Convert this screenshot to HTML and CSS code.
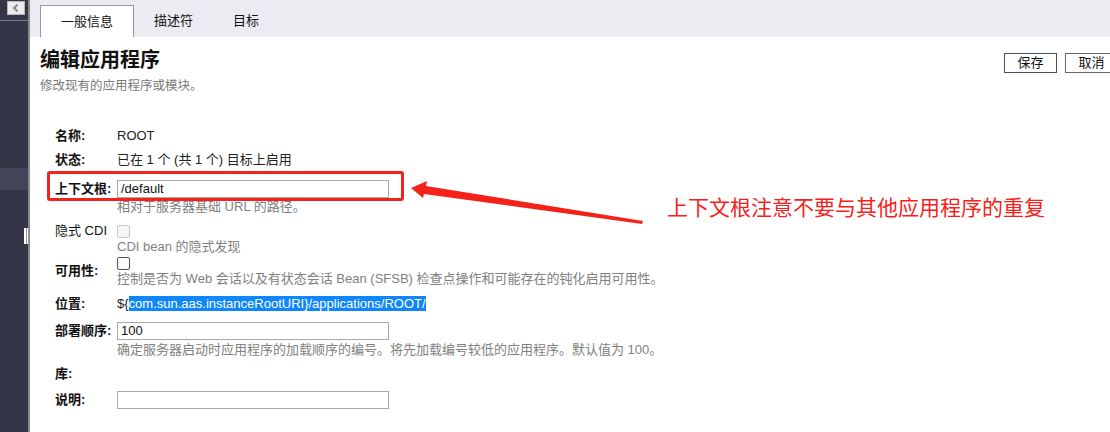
FILE: index.html
```html
<!DOCTYPE html>
<html lang="zh-CN">
<head>
<meta charset="utf-8">
<title>编辑应用程序</title>
<link rel="stylesheet" href="styles.css">
</head>
<body>
<div class="app">
  <aside class="sidebar">
    <div class="side-top">
      <button class="collapse" type="button" aria-label="收起">
        <svg width="10" height="10" viewBox="0 0 10 10"><path d="M6.5 1.5 L3 5 L6.5 8.5" fill="none" stroke="#8a8a8a" stroke-width="2"/></svg>
      </button>
    </div>
    <div class="side-item active"></div>
    <div class="grip"><i></i><i></i><i></i></div>
  </aside>
  <main class="main">
    <nav class="tabbar">
      <div class="tab active">一般信息</div>
      <div class="tab">描述符</div>
      <div class="tab">目标</div>
    </nav>
    <section class="content">
      <header class="head">
        <div class="titles">
          <h1 class="title">编辑应用程序</h1>
          <p class="subtitle">修改现有的应用程序或模块。</p>
        </div>
        <div class="actions">
          <button class="btn primary" type="button">保存</button>
          <button class="btn" type="button">取消</button>
        </div>
      </header>
      <div class="form">
        <div class="row r-name">
          <div class="lbl">名称:</div>
          <div class="val">ROOT</div>
        </div>
        <div class="row r-status">
          <div class="lbl">状态:</div>
          <div class="val">已在 1 个 (共 1 个) 目标上启用</div>
        </div>
        <div class="row r-ctx">
          <div class="lbl lbl-input">上下文根:</div>
          <div class="val">
            <div class="field">/default</div>
            <div class="help">相对于服务器基础 URL 的路径。</div>
          </div>
        </div>
        <div class="row r-cdi">
          <div class="lbl light">隐式 CDI</div>
          <div class="val">
            <span class="check disabled"></span>
            <div class="help">CDI bean 的隐式发现</div>
          </div>
        </div>
        <div class="row r-avail">
          <div class="lbl">可用性:</div>
          <div class="val">
            <span class="check"></span>
            <div class="help">控制是否为 Web 会话以及有状态会话 Bean (SFSB) 检查点操作和可能存在的钝化启用可用性。</div>
          </div>
        </div>
        <div class="row r-loc">
          <div class="lbl">位置:</div>
          <div class="val">${<span class="sel">com.sun.aas.instanceRootURI}/applications/ROOT/</span></div>
        </div>
        <div class="row r-order">
          <div class="lbl lbl-input">部署顺序:</div>
          <div class="val">
            <div class="field">100</div>
            <div class="help">确定服务器启动时应用程序的加载顺序的编号。将先加载编号较低的应用程序。默认值为 100。</div>
          </div>
        </div>
        <div class="row r-lib">
          <div class="lbl">库:</div>
          <div class="val"></div>
        </div>
        <div class="row r-desc">
          <div class="lbl lbl-input">说明:</div>
          <div class="val">
            <div class="field"></div>
          </div>
        </div>
      </div>
    </section>
  </main>
</div>

<div class="mark-box"></div>
<svg class="mark-arrow" width="240" height="50" viewBox="0 0 240 50">
  <polygon points="1,14 17,7 16,12 233,47 232,50 14,20 13,24" fill="#f5221b"/>
</svg>
<div class="mark-note">上下文根注意不要与其他应用程序的重复</div>
</body>
</html>
```

FILE: styles.css
```css
html, body {
  margin: 0;
  padding: 0;
}
body {
  width: 1110px;
  height: 432px;
  overflow: hidden;
  position: relative;
  background: #fff;
  font-family: "Liberation Sans", "Noto Sans CJK SC", sans-serif;
  font-size: 13px;
  color: #222;
}
.app {
  display: flex;
  height: 432px;
}
.sidebar {
  width: 28px;
  flex: none;
  background: #343547;
  border-right: 2px solid #8a8a8a;
  position: relative;
}
.side-top {
  height: 21px;
  border-bottom: 1px solid #7a7a86;
  display: flex;
  justify-content: flex-end;
  padding-right: 3px;
  box-sizing: border-box;
}
.collapse {
  margin-top: 1px;
  width: 18px;
  height: 14px;
  padding: 0;
  border: 1px solid #b8b8b8;
  background: #ececec;
  display: flex;
  align-items: center;
  justify-content: center;
}
.side-item {
  height: 22px;
  margin-top: 147px;
}
.side-item.active {
  background: #42445a;
}
.grip {
  position: absolute;
  left: 24px;
  top: 228px;
  width: 5px;
  height: 16px;
  background: #fff;
  display: flex;
  justify-content: space-between;
  box-sizing: border-box;
}
.grip i {
  width: 1px;
  background: #9a9a9a;
}
.grip i:first-child { background: #fff; }
.main {
  flex: 1;
  min-width: 0;
  overflow: hidden;
}
.tabbar {
  height: 37px;
  background: #ecebf1;
  display: flex;
  align-items: flex-end;
  padding-left: 10px;
}
.tab {
  height: 32px;
  line-height: 31px;
  padding: 0 20px;
  font-size: 13px;
  color: #111;
  box-sizing: border-box;
}
.tab.active {
  background: #fff;
  border: 1px solid #8d9ba2;
  border-bottom: 0;
  width: 94px;
  text-align: center;
}
.content {
  padding: 12px 0 0 10px;
}
.head {
  display: flex;
  align-items: flex-start;
}
.titles {
  flex: 1;
}
.title {
  margin: 0;
  font-size: 20px;
  line-height: 22px;
  font-weight: bold;
  color: #111;
}
.subtitle {
  margin: 7px 0 0;
  font-size: 12.5px;
  line-height: 16px;
  color: #7a7a7a;
}
.actions {
  display: flex;
  gap: 8px;
  margin-top: 4px;
  margin-right: -8px;
}
.btn {
  width: 53px;
  height: 20px;
  padding: 0;
  font-family: inherit;
  font-size: 13px;
  line-height: 18px;
  color: #111;
  background: #fff;
  border: 1px solid #666;
  box-sizing: border-box;
}
.btn.primary {
  border-color: #3f5566;
}
.form {
  margin-top: 34px;
  padding-left: 15px;
}
.row {
  display: flex;
  align-items: flex-start;
}
.lbl {
  width: 62px;
  flex: none;
  line-height: 16px;
  font-weight: bold;
  color: #111;
}
.lbl.light {
  font-weight: normal;
}
.lbl-input {
  line-height: 18px;
}
.val {
  line-height: 16px;
  color: #222;
}
.field {
  width: 272px;
  height: 18px;
  box-sizing: border-box;
  border: 1px solid #a9a9a9;
  padding: 0 3px;
  line-height: 16px;
  font-size: 13px;
  color: #111;
}
.help {
  color: #808080;
  line-height: 16px;
  margin-top: 1px;
}
.check {
  display: block;
  width: 13px;
  height: 13px;
  box-sizing: border-box;
  border: 1px solid #555;
  border-radius: 2px;
  background: #fff;
  margin: 2px 0 0;
}
.check.disabled {
  border-color: #c8c8c8;
  background: #f6f6f6;
}
.r-status { margin-top: 8px; }
.r-ctx { margin-top: 12px; }
.r-cdi { margin-top: 8px; }
.r-avail { margin-top: 0; align-items: center; }
.r-loc { margin-top: 9px; }
.r-order { margin-top: 10px; }
.r-order .help { margin-top: 2px; }
.r-lib { margin-top: 8px; }
.r-desc { margin-top: 9px; }
.sel {
  background: #0f87fb;
  color: #fff;
}
.mark-box {
  position: absolute;
  left: 47px;
  top: 171px;
  width: 357px;
  height: 30px;
  box-sizing: border-box;
  border: 3px solid #f5221b;
  border-radius: 3px;
}
.mark-arrow {
  position: absolute;
  left: 410px;
  top: 174px;
}
.mark-note {
  position: absolute;
  left: 667px;
  top: 193px;
  font-family: "Noto Sans CJK SC", sans-serif;
  font-size: 21px;
  line-height: 26px;
  color: #f5221b;
}
```
